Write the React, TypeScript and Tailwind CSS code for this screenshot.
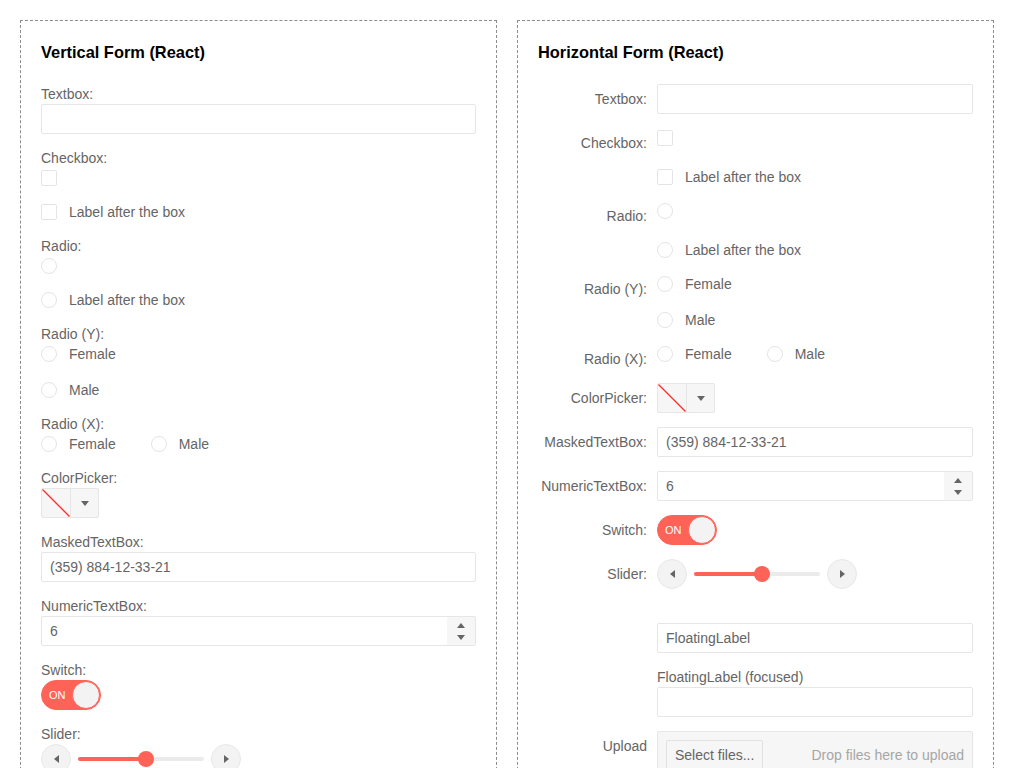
import React from 'react';

const labelText = 'text-[14px] leading-5 text-[#656565]';

function Caret({ dir }: { dir: 'up' | 'down' | 'left' | 'right' }) {
	const pts = {
		up: '0,5 4,0 8,5',
		down: '0,0 8,0 4,5',
		left: '5,0 5,8 0,4',
		right: '0,0 0,8 5,4',
	}[dir];
	const vertical = dir === 'up' || dir === 'down';
	return (
		<svg
			width={vertical ? 8 : 5}
			height={vertical ? 5 : 8}
			viewBox={vertical ? '0 0 8 5' : '0 0 5 8'}
			className="block"
		>
			<polygon points={pts} fill="#656565" />
		</svg>
	);
}

function TextBox({ value = '' }: { value?: string }) {
	return (
		<input
			readOnly
			value={value}
			className="block w-full h-[30px] px-2 border border-[#e6e6e6] rounded-[2px] bg-white text-[14px] text-[#656565] outline-none"
		/>
	);
}

function Box({ round = false }: { round?: boolean }) {
	return (
		<span
			className={
				'block w-4 h-4 shrink-0 border border-[#e4e4e4] bg-white ' +
				(round ? 'rounded-full' : 'rounded-[2px]')
			}
		/>
	);
}

function Choice({ round = false, label }: { round?: boolean; label?: string }) {
	return (
		<div className="flex items-center h-5 gap-3">
			<Box round={round} />
			{label && <span className={labelText}>{label}</span>}
		</div>
	);
}

function RadioY() {
	return (
		<div className="flex flex-col gap-4">
			<Choice round label="Female" />
			<Choice round label="Male" />
		</div>
	);
}

function RadioX() {
	return (
		<div className="flex items-center gap-[35px]">
			<Choice round label="Female" />
			<Choice round label="Male" />
		</div>
	);
}

function ColorPicker() {
	return (
		<div className="flex w-[58px] h-[30px] border border-[#e6e6e6] rounded-[2px] bg-[#f6f6f6]">
			<div className="w-[28px] h-full">
				<svg width="28" height="28" viewBox="0 0 28 28" className="block">
					<line x1="0.5" y1="0.5" x2="27.5" y2="27.5" stroke="#ff2a2a" strokeWidth="1.3" />
				</svg>
			</div>
			<div className="flex-1 flex items-center justify-center border-l border-[#e6e6e6]">
				<Caret dir="down" />
			</div>
		</div>
	);
}

function NumericTextBox() {
	return (
		<div className="flex h-[30px] border border-[#e6e6e6] rounded-[2px] bg-white">
			<input
				readOnly
				value="6"
				className="flex-1 min-w-0 px-2 bg-transparent text-[14px] text-[#656565] outline-none"
			/>
			<div className="w-[28px] flex flex-col items-center justify-center gap-[7px] bg-[#f6f6f6]">
				<Caret dir="up" />
				<Caret dir="down" />
			</div>
		</div>
	);
}

function Switch() {
	return (
		<div className="relative flex items-center w-[60px] h-[30px] rounded-full bg-[#ff6358] border border-[#ff6358]">
			<span className="ml-[7px] text-[11px] leading-none text-white">ON</span>
			<span className="absolute right-0 top-0 w-7 h-7 rounded-full bg-[#f3f3f3] border border-[#ff6358]" />
		</div>
	);
}

function RoundButton({ dir }: { dir: 'left' | 'right' }) {
	return (
		<div className="flex items-center justify-center w-[30px] h-[30px] rounded-full bg-[#f3f3f3] border border-[#e8e8e8]">
			<Caret dir={dir} />
		</div>
	);
}

function Slider() {
	return (
		<div className="flex items-center gap-[7px]">
			<RoundButton dir="left" />
			<div className="relative w-[126px] h-1 rounded-full bg-[#ebebeb]">
				<div className="absolute left-0 top-0 h-1 w-[68px] rounded-full bg-[#ff6358]" />
				<div className="absolute left-[60px] top-[-6px] w-4 h-4 rounded-full bg-[#ff6358]" />
			</div>
			<RoundButton dir="right" />
		</div>
	);
}

function Upload() {
	return (
		<div className="flex items-start justify-between p-2 border border-[#e6e6e6] rounded-[2px] bg-[#f6f6f6]">
			<button className="h-[30px] px-[8px] border border-[#e2e2e2] rounded-[2px] bg-[#f6f6f6] text-[14px] text-[#656565]">
				Select files...
			</button>
			<span className="text-[14px] leading-[30px] text-[#a6a6a6]">Drop files here to upload</span>
		</div>
	);
}

function VField({ label, children }: { label: string; children: React.ReactNode }) {
	return (
		<div>
			<div className={labelText}>{label}</div>
			{children}
		</div>
	);
}

function HField({ label, children }: { label?: string; children: React.ReactNode }) {
	return (
		<div className="flex">
			<div className={'w-[109px] mr-[10px] shrink-0 pt-[5px] text-right ' + labelText}>{label}</div>
			<div className="flex-1 min-w-0">{children}</div>
		</div>
	);
}

function Panel({ title, children }: { title: string; children: React.ReactNode }) {
	return (
		<div className="w-[477px] shrink-0 p-5 border border-dashed border-[#8c8c8c]">
			<div className="flex flex-col gap-[14px]">
				<h2 className="mb-[6px] text-[16.4px] leading-[23px] font-bold text-black">{title}</h2>
				{children}
			</div>
		</div>
	);
}

export default function App() {
	return (
		<div className="flex items-start gap-5 p-5 bg-white font-['Liberation_Sans',Arial,sans-serif]">
			<Panel title="Vertical Form (React)">
				<VField label="Textbox:">
					<TextBox />
				</VField>
				<VField label="Checkbox:">
					<Choice />
				</VField>
				<Choice label="Label after the box" />
				<VField label="Radio:">
					<Choice round />
				</VField>
				<Choice round label="Label after the box" />
				<VField label="Radio (Y):">
					<RadioY />
				</VField>
				<VField label="Radio (X):">
					<RadioX />
				</VField>
				<VField label="ColorPicker:">
					<ColorPicker />
				</VField>
				<VField label="MaskedTextBox:">
					<TextBox value="(359) 884-12-33-21" />
				</VField>
				<VField label="NumericTextBox:">
					<NumericTextBox />
				</VField>
				<VField label="Switch:">
					<Switch />
				</VField>
				<VField label="Slider:">
					<Slider />
				</VField>
			</Panel>

			<Panel title="Horizontal Form (React)">
				<HField label="Textbox:">
					<TextBox />
				</HField>
				<HField label="Checkbox:">
					<Choice />
				</HField>
				<HField>
					<Choice label="Label after the box" />
				</HField>
				<HField label="Radio:">
					<Choice round />
				</HField>
				<HField>
					<Choice round label="Label after the box" />
				</HField>
				<HField label="Radio (Y):">
					<RadioY />
				</HField>
				<HField label="Radio (X):">
					<RadioX />
				</HField>
				<HField label="ColorPicker:">
					<ColorPicker />
				</HField>
				<HField label="MaskedTextBox:">
					<TextBox value="(359) 884-12-33-21" />
				</HField>
				<HField label="NumericTextBox:">
					<NumericTextBox />
				</HField>
				<HField label="Switch:">
					<Switch />
				</HField>
				<HField label="Slider:">
					<Slider />
				</HField>
				<div className="flex pt-5">
					<div className="w-[109px] mr-[10px] shrink-0" />
					<div className="flex-1 min-w-0">
						<TextBox value="FloatingLabel" />
					</div>
				</div>
				<div className="flex">
					<div className="w-[109px] mr-[10px] shrink-0" />
					<div className="flex-1 min-w-0">
						<div className={labelText}>FloatingLabel (focused)</div>
						<TextBox />
					</div>
				</div>
				<HField label="Upload">
					<Upload />
				</HField>
			</Panel>
		</div>
	);
}
